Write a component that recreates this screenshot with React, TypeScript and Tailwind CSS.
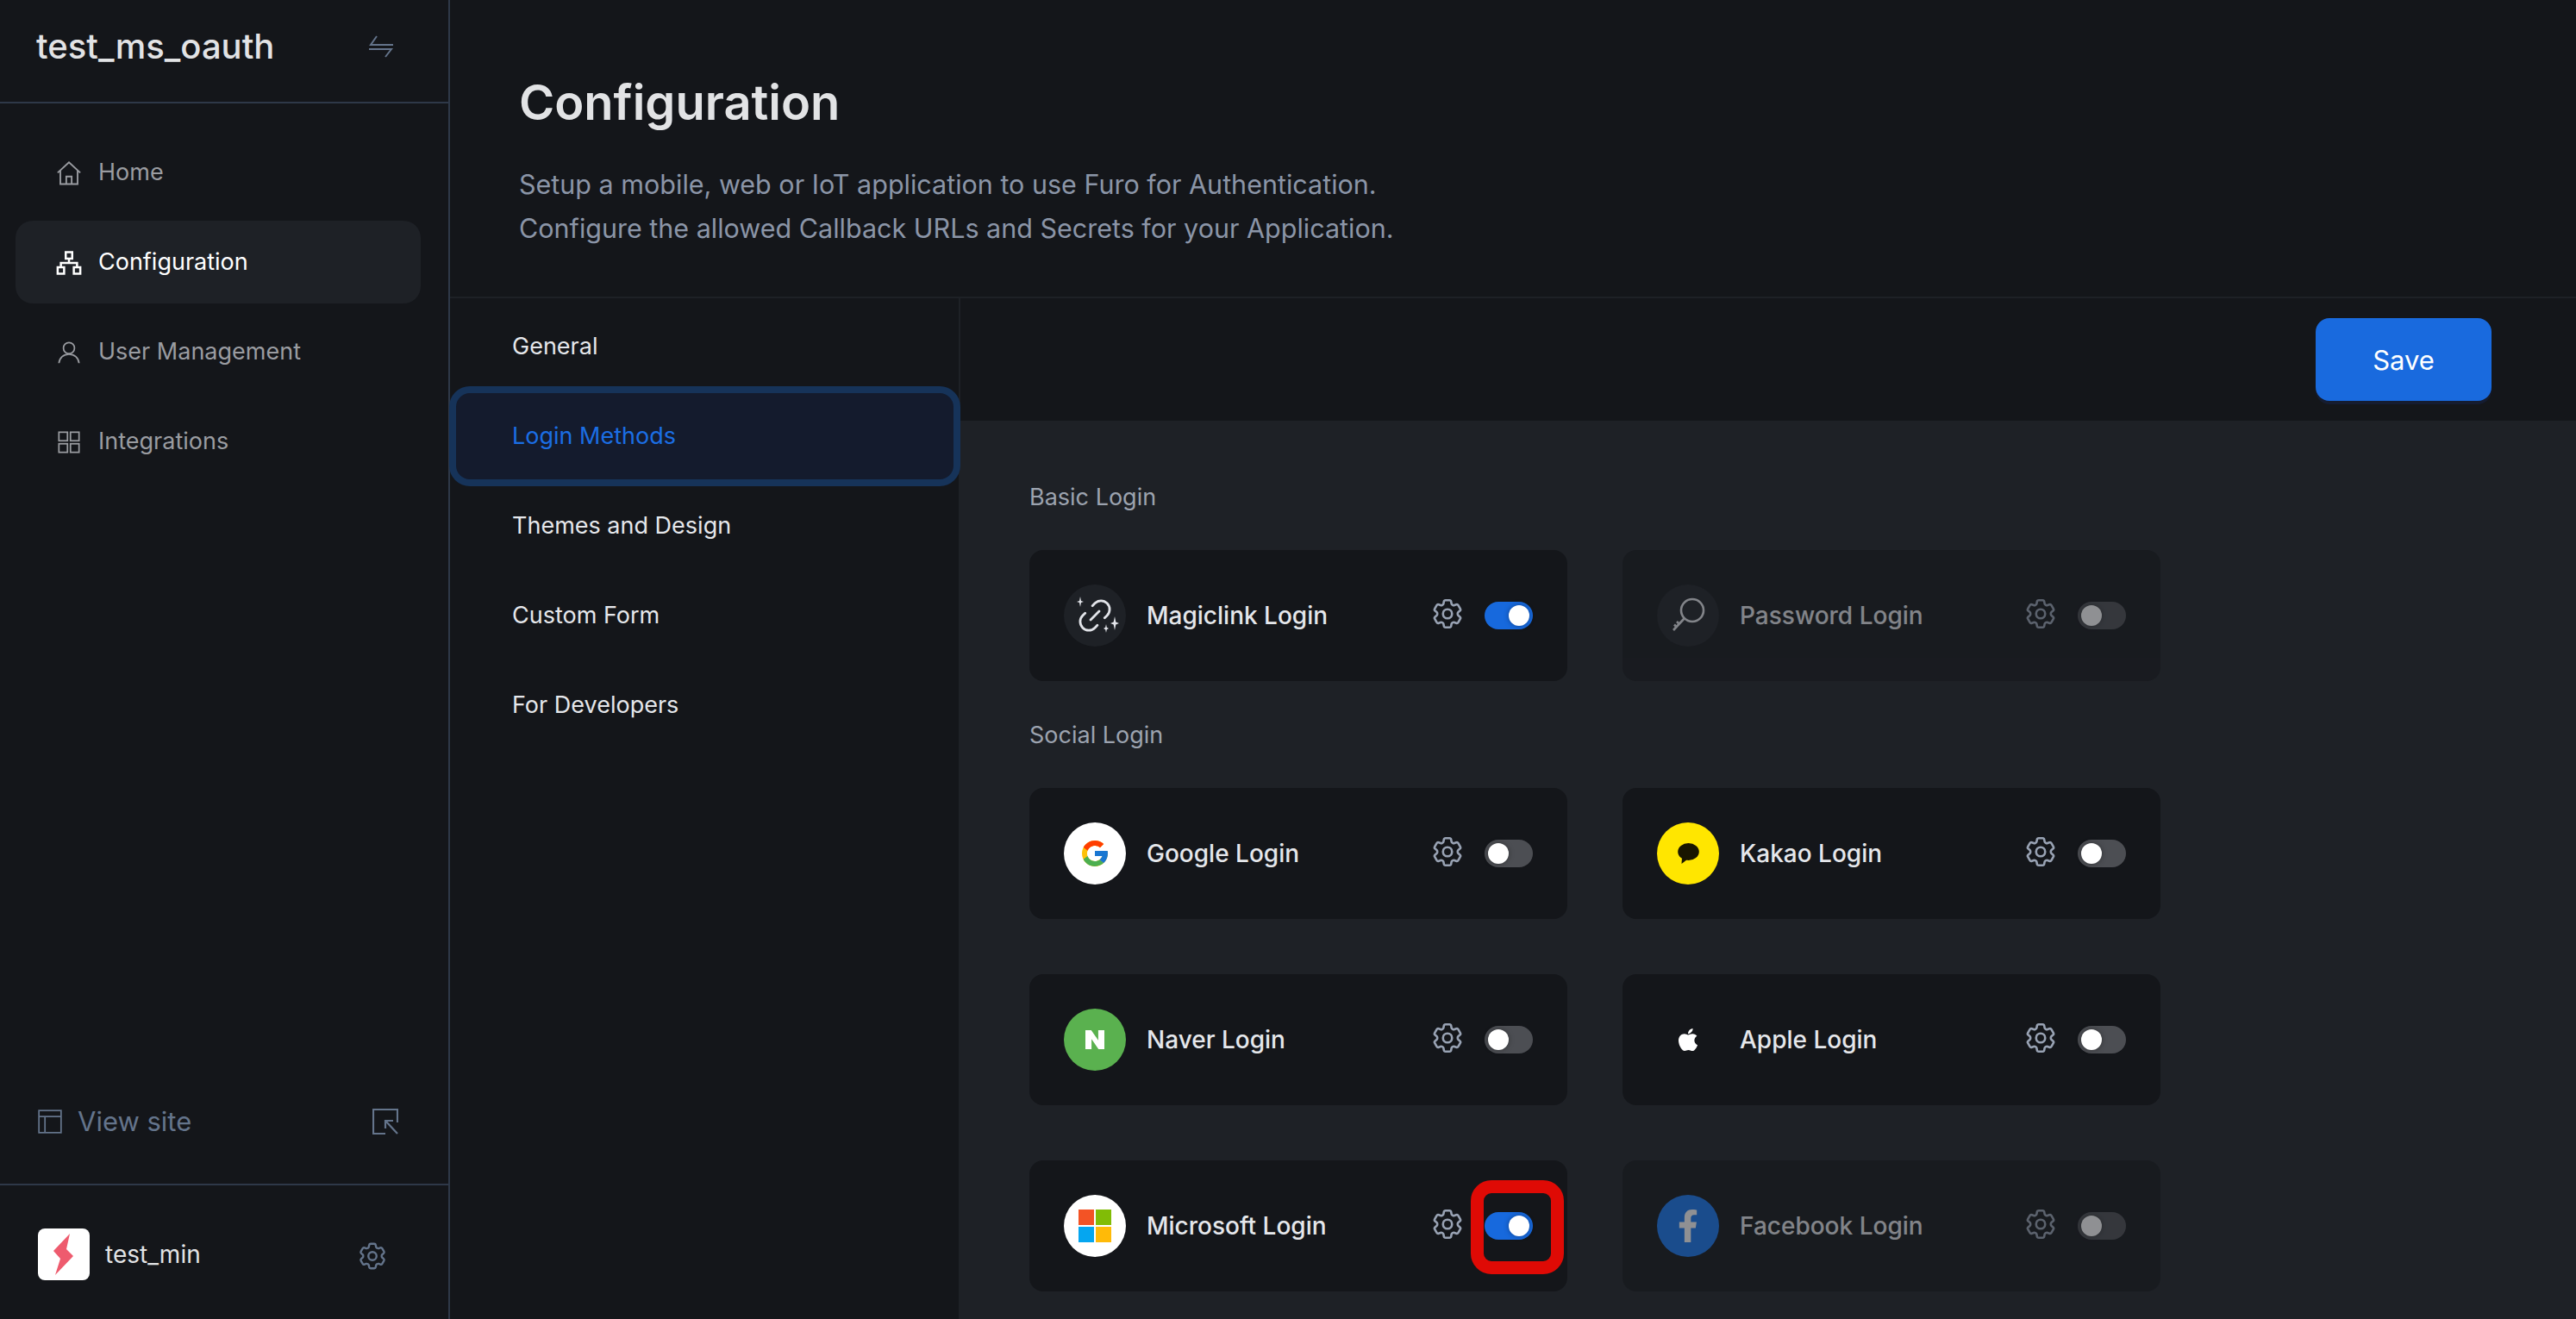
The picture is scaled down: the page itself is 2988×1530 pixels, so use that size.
import type { ReactNode } from "react";
import { FaApple, FaFacebookF } from "react-icons/fa";
import { FcGoogle } from "react-icons/fc";
import { HiOutlineCog6Tooth } from "react-icons/hi2";
import { SiNaver } from "react-icons/si";

function Svg({ className, children, sw = 1.5 }: { className: string; children: ReactNode; sw?: number }) {
  return (
    <svg viewBox="0 0 24 24" fill="none" stroke="currentColor" strokeWidth={sw} className={className}>
      {children}
    </svg>
  );
}

function HomeIcon() {
  return (
    <Svg className="-mx-[1px] size-[30px]">
      <path d="M1.5 11.5 12 1.800l10.500 9.700" />
      <path d="M4 9.500V22h16V9.500" />
      <path d="M9.500 22v-7h5v7" />
    </Svg>
  );
}

function TreeIcon() {
  return (
    <Svg className="-mx-[1px] size-[30px]" sw={2}>
      <rect x="9" y="2" width="6" height="6" />
      <rect x="1.500" y="16" width="6" height="6" />
      <rect x="16.500" y="16" width="6" height="6" />
      <path d="M12 8v4M4.500 16v-4h15v4" />
    </Svg>
  );
}

function UserIcon() {
  return (
    <Svg className="size-[28px]">
      <circle cx="12" cy="7.500" r="5.500" />
      <path d="M2 22.500c.6-5.600 4.600-9 10-9s9.400 3.400 10 9" />
    </Svg>
  );
}

function GridIcon() {
  return (
    <Svg className="size-[28px]">
      <rect x="2" y="2" width="8.500" height="8.500" />
      <rect x="13.500" y="2" width="8.500" height="8.500" />
      <rect x="2" y="13.500" width="8.500" height="8.500" />
      <rect x="13.500" y="13.500" width="8.500" height="8.500" />
    </Svg>
  );
}

function MagicIcon() {
  return (
    <svg viewBox="0 0 72 72" className="size-[72px] text-[#e2e4e9]">
      <g
        fill="none"
        stroke="currentColor"
        strokeWidth="1.400"
        strokeLinecap="round"
        transform="translate(36 36) rotate(-45) scale(2) translate(-12 -12)"
      >
        <path d="M9 17H7A5 5 0 0 1 7 7h2" />
        <path d="M15 7h2a5 5 0 1 1 0 10h-2" />
        <path d="M8.500 12h7" />
      </g>
      <g fill="currentColor">
        <path d="M19 14l1 5 3 1-3 1-1 5-1-5-3-1 3-1z" />
        <path d="M59 37l1.300 6.500 3.700 1.500-3.700 1.500L59 53l-1.300-6.500L54 45l3.700-1.500z" />
        <path d="M49 46l.8 3.800 2.200 1.200-2.200 1.200L49 56l-.8-3.800L46 51l2.200-1.200z" />
      </g>
    </svg>
  );
}

function KeyIcon() {
  return (
    <svg viewBox="0 0 44 44" fill="none" stroke="currentColor" strokeWidth="2.600" className="size-[44px] text-[#e5e7eb]">
      <circle cx="27" cy="16" r="13" />
      <path d="M18 25 5 39" />
      <path d="M12 32l-3-3M9 35.500l-3-3" />
    </svg>
  );
}

function KakaoIcon() {
  return (
    <svg viewBox="0 0 25 24" className="h-[24px] w-[25px] text-[#191600]">
      <ellipse cx="12.500" cy="10" rx="12.300" ry="10" fill="currentColor" />
      <path d="M5 17l-.5 7 6.500-5z" fill="currentColor" />
    </svg>
  );
}

function MsIcon() {
  return (
    <div className="grid grid-cols-2 gap-[2px]">
      <div className="size-[18px] bg-[#f35325]" />
      <div className="size-[18px] bg-[#81bc06]" />
      <div className="size-[18px] bg-[#05a6f0]" />
      <div className="size-[18px] bg-[#ffba08]" />
    </div>
  );
}

function Toggle({ on }: { on?: boolean }) {
  return (
    <div className={`flex h-[32px] w-[56px] items-center rounded-full p-[4px] ${on ? "justify-end bg-[#1769dd]" : "justify-start bg-[#4c4e53]"}`}>
      <div className="size-[24px] rounded-full bg-white shadow-[0_0_6px_rgba(0,0,0,0.35)]" />
    </div>
  );
}

type LoginCardProps = {
  name: string;
  iconBg: string;
  icon: ReactNode;
  on?: boolean;
  disabled?: boolean;
};

function LoginCard({ name, iconBg, icon, on, disabled }: LoginCardProps) {
  return (
    <div className={`flex h-[152px] items-center rounded-[16px] bg-[#14161a] px-[40px] ${disabled ? "opacity-50" : ""}`}>
      <div className={`flex size-[72px] items-center justify-center rounded-full ${iconBg}`}>{icon}</div>
      <span className="ml-[24px] flex-1 text-[28px] font-medium text-[#e5e7eb]">{name}</span>
      <HiOutlineCog6Tooth className="mr-[22px] size-[42px] -translate-y-[2px] text-[#98a2b3]" />
      <Toggle on={on} />
    </div>
  );
}

const navItems = [
  { label: "Home", icon: <HomeIcon /> },
  { label: "Configuration", icon: <TreeIcon />, active: true },
  { label: "User Management", icon: <UserIcon /> },
  { label: "Integrations", icon: <GridIcon /> },
];

const subItems = ["General", "Login Methods", "Themes and Design", "Custom Form", "For Developers"];

export default function App() {
  return (
    <div className="flex h-[1530px] w-[2988px] overflow-hidden bg-[#14161a] [font-family:Inter,sans-serif]">
      <aside className="flex w-[522px] shrink-0 flex-col border-r-2 border-[#2e3848]">
        <div className="flex h-[120px] shrink-0 items-center justify-between border-b-2 border-[#2e3848] pb-[10px] pl-[42px] pr-[64px]">
          <span className="text-[40px] font-medium text-[#e2e3e5]">test_ms_oauth</span>
          <svg viewBox="0 0 28 26" fill="none" stroke="currentColor" strokeWidth="2" className="h-[26px] w-[28px] text-[#64748b]">
            <path d="M28 11H2L9 1" />
            <path d="M0 16h26l-7 9" />
          </svg>
        </div>
        <nav className="mt-[32px] flex flex-col gap-[8px] pl-[18px] pr-[32px]">
          {navItems.map((item) => (
            <div
              key={item.label}
              className={`flex h-[96px] items-center gap-[20px] rounded-[20px] pl-[48px] pt-[1px] text-[27px] ${item.active ? "bg-[#1e2126] text-white" : "text-[#9a9ca1]"}`}
            >
              {item.icon}
              {item.label}
            </div>
          ))}
        </nav>
        <div className="mb-[44px] mt-auto flex h-[56px] items-center pl-[44px] pr-[58px] text-[#64748b]">
          <Svg className="size-[28px]">
            <rect x="1" y="1" width="22" height="22" />
            <path d="M1 7h22M7 7v16" />
          </Svg>
          <span className="ml-[18px] flex-1 text-[31px]">View site</span>
          <svg viewBox="0 0 30 30" fill="none" stroke="currentColor" strokeWidth="2.200" className="size-[30px]">
            <path d="M15 29H1V1h28v15" />
            <path d="M29 29 16 15M15 23v-9h9" />
          </svg>
        </div>
        <div className="flex h-[157px] shrink-0 items-center border-t-2 border-[#2e3848] pl-[44px] pr-[69px] pt-[5px]">
          <div className="flex size-[60px] items-center justify-center rounded-[8px] bg-white">
            <svg viewBox="0 0 24 48" className="h-[48px] w-[24px]">
              <path d="M19 0 0 20l8 9-6 19L23 26l-8-8z" fill="#ee5b6e" />
            </svg>
          </div>
          <span className="ml-[18px] flex-1 text-[28px] text-[#e2e3e5]">test_min</span>
          <HiOutlineCog6Tooth className="size-[38px] translate-y-[2px] text-[#64748b]" />
        </div>
      </aside>

      <main className="flex min-w-0 flex-1 flex-col">
        <header className="h-[346px] shrink-0 border-b-2 border-[#1e2126] pl-[80px] pt-[85px]">
          <h1 className="text-[56px] font-semibold leading-[68px] text-[#e2e3e5]">Configuration</h1>
          <p className="mt-[35px] text-[30.500px] leading-[51px] text-[#8b95a7]">
            Setup a mobile, web or IoT application to use Furo for Authentication.
            <br />
            Configure the allowed Callback URLs and Secrets for your Application.
          </p>
        </header>

        <div className="flex min-h-0 flex-1">
          <div className="flex w-[592px] shrink-0 flex-col gap-[4px] border-r-2 border-[#1e2126] pt-[6px]">
            {subItems.map((label) =>
              label === "Login Methods" ? (
                <div
                  key={label}
                  className="ml-[7px] mr-[6px] flex h-[100px] items-center rounded-[16px] bg-[#141b2d] pl-[65px] pt-[1px] text-[27px] text-[#1b6ee4] ring-8 ring-[#163359]"
                >
                  {label}
                </div>
              ) : (
                <div key={label} className="ml-[7px] mr-[6px] flex h-[100px] items-center pl-[65px] pt-[1px] text-[27px] text-[#e5e7eb]">
                  {label}
                </div>
              ),
            )}
          </div>

          <div className="flex min-w-0 flex-1 flex-col">
            <div className="flex h-[142px] shrink-0 items-center justify-end pr-[98px]">
              <button className="h-[96px] w-[204px] rounded-[16px] bg-[#196ade] pt-[2px] text-[31px] text-white shadow-[0_4px_0_#151c30]">
                Save
              </button>
            </div>
            <div className="flex-1 bg-[#1e2126] pl-[80px] pt-[68px]">
              <div className="h-[40px] text-[27px] leading-[41px] text-[#9ca3af]">Basic Login</div>
              <div className="mt-[42px] grid w-[1312px] grid-cols-2 gap-x-[64px]">
                <LoginCard name="Magiclink Login" iconBg="bg-[#1e2126]" icon={<MagicIcon />} on />
                <LoginCard name="Password Login" iconBg="bg-[#1e2126]" icon={<KeyIcon />} disabled />
              </div>
              <div className="mt-[42px] h-[40px] text-[27px] leading-[41px] text-[#9ca3af]">Social Login</div>
              <div className="relative mt-[42px] grid w-[1312px] grid-cols-2 gap-x-[64px] gap-y-[64px]">
                <LoginCard name="Google Login" iconBg="bg-white" icon={<FcGoogle className="size-[36px]" />} />
                <LoginCard name="Kakao Login" iconBg="bg-[#ffe600]" icon={<KakaoIcon />} />
                <LoginCard name="Naver Login" iconBg="bg-[#5ab14f]" icon={<SiNaver className="size-[22px] text-white" />} />
                <LoginCard name="Apple Login" iconBg="bg-transparent" icon={<FaApple className="size-[30px] text-white" />} />
                <LoginCard name="Microsoft Login" iconBg="bg-white" icon={<MsIcon />} on />
                <LoginCard name="Facebook Login" iconBg="bg-[#1877f2]" icon={<FaFacebookF className="size-[38px] text-white" />} disabled />
                {/* red annotation round the Microsoft toggle */}
                <div className="absolute left-[512px] top-[455px] h-[109px] w-[108px] rounded-[24px] border-[15px] border-[#df0a05]" />
              </div>
            </div>
          </div>
        </div>
      </main>
    </div>
  );
}
